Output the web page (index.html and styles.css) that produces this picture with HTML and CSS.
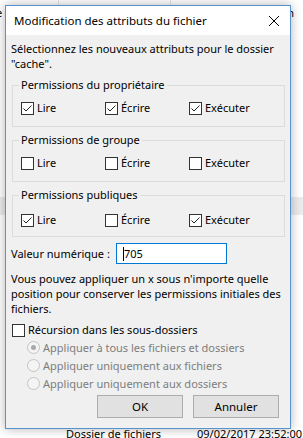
FILE: index.html
```html
<!DOCTYPE html>
<html lang="fr">
<head>
  <meta charset="UTF-8" />
  <title>Modification des attributs du fichier</title>
  <link rel="stylesheet" href="styles.css">
</head>
<body>
  <div class="explorer">
    <div class="header">
      <span class="col col-name"></span>
      <span class="col col-size"></span>
      <span class="col col-type"></span>
    </div>
    <div class="row top-row">
      <span class="cell-name">e</span>
      <span class="cell-date">n</span>
    </div>
    <div class="row band"></div>
    <div class="row last-row">
      <span class="cell-type">Dossier de fichiers</span>
      <span class="cell-time">09/02/2017 23:52:00</span>
    </div>
  </div>

  <div class="dialog">
    <div class="titlebar">
      <span class="title">Modification des attributs du fichier</span>
      <svg class="close" viewBox="0 0 10 10" fill="none" stroke="#000" stroke-width="1">
        <path d="M0 0L10 10M10 0L0 10"></path>
      </svg>
    </div>

    <div class="content">
      <p class="intro">Sélectionnez les nouveaux attributs pour le dossier "cache".</p>

      <fieldset class="group">
        <legend>Permissions du propriétaire</legend>
        <div class="checks">
          <label class="check"><span class="box"><svg viewBox="0 0 11 11"><path d="M1.5 5.5L4 8L9.5 2.5"></path></svg></span>Lire</label>
          <label class="check"><span class="box"><svg viewBox="0 0 11 11"><path d="M1.5 5.5L4 8L9.5 2.5"></path></svg></span>Écrire</label>
          <label class="check"><span class="box"><svg viewBox="0 0 11 11"><path d="M1.5 5.5L4 8L9.5 2.5"></path></svg></span>Exécuter</label>
        </div>
      </fieldset>

      <fieldset class="group">
        <legend>Permissions de groupe</legend>
        <div class="checks">
          <label class="check"><span class="box"></span>Lire</label>
          <label class="check"><span class="box"></span>Écrire</label>
          <label class="check"><span class="box"></span>Exécuter</label>
        </div>
      </fieldset>

      <fieldset class="group public">
        <legend>Permissions publiques</legend>
        <div class="checks">
          <label class="check"><span class="box"><svg viewBox="0 0 11 11"><path d="M1.5 5.5L4 8L9.5 2.5"></path></svg></span>Lire</label>
          <label class="check"><span class="box"></span>Écrire</label>
          <label class="check"><span class="box"><svg viewBox="0 0 11 11"><path d="M1.5 5.5L4 8L9.5 2.5"></path></svg></span>Exécuter</label>
        </div>
      </fieldset>

      <div class="value-row">
        <span class="value-label">Valeur numérique :</span>
        <div class="value-input"><span class="caret"></span>705</div>
      </div>

      <p class="hint">Vous pouvez appliquer un x sous n'importe quelle position pour conserver les permissions initiales des fichiers.</p>

      <label class="check recurse"><span class="box"></span>Récursion dans les sous-dossiers</label>

      <div class="radios">
        <div class="radio"><span class="dot on"></span>Appliquer à tous les fichiers et dossiers</div>
        <div class="radio"><span class="dot"></span>Appliquer uniquement aux fichiers</div>
        <div class="radio"><span class="dot"></span>Appliquer uniquement aux dossiers</div>
      </div>

      <div class="buttons">
        <button class="btn">OK</button>
        <button class="btn">Annuler</button>
      </div>
    </div>
  </div>
</body>
</html>
```

FILE: styles.css
```css
:root {
  --face: #f0f0f0;
  --group-line: #dcdcdc;
  --accent: #5592d0;
  --input-line: #0078d7;
  --disabled: #7d7d7d;
}

body {
  margin: 0;
  width: 303px;
  height: 438px;
  overflow: hidden;
  position: relative;
  background: #fff;
  font-family: 'Noto Sans', 'Open Sans', sans-serif;
  font-size: 11px;
  color: #000;
}

/* file list behind the dialog */
.explorer {
  display: flex;
  flex-direction: column;
  height: 438px;
}

.header {
  display: flex;
  height: 5px;
}

.col {
  border-right: 1px solid #e5e5e5;
}

.col-name { width: 58px; }
.col-size { width: 111px; }
.col-type { flex: 1; border-right: none; }

.row {
  display: flex;
  height: 16px;
  line-height: 16px;
}

.top-row {
  justify-content: space-between;
  padding-right: 9px;
}

.cell-name {
  margin-left: -4px;
}

.band {
  margin-top: 176px;
  height: 18px;
  background: #ebebeb;
}

.last-row {
  margin-top: auto;
  height: 14px;
  line-height: 14px;
  margin-bottom: -3px;
}

.cell-type {
  margin-left: 66px;
  width: 131px;
}

/* dialog */
.dialog {
  position: absolute;
  left: 5px;
  top: 5px;
  width: 284px;
  height: 422px;
  border: 1px solid var(--accent);
  background: var(--face);
  box-shadow: 0 0 10px rgba(0, 0, 0, 0.3);
  display: flex;
  flex-direction: column;
}

.titlebar {
  height: 29px;
  flex-shrink: 0;
  background: #fff;
  display: flex;
  align-items: center;
  justify-content: space-between;
  padding: 0 11px 0 8px;
  font-size: 11.5px;
}

.close {
  width: 10px;
  height: 10px;
}

.content {
  padding: 6px 5px 0 5px;
  line-height: 15px;
}

.intro, .hint {
  margin: 0;
}

.group {
  margin: 6px 0 0 1px;
  padding: 7px 8px 10px;
  border: 1px solid var(--group-line);
  min-width: 0;
}

.group + .group {
  margin-top: 5px;
}

.group.public {
  padding-top: 9px;
  padding-bottom: 8px;
}

.group legend {
  padding: 0 2px;
  margin-left: -2px;
  line-height: 16px;
}

.checks {
  display: grid;
  grid-template-columns: 84px 84px 1fr;
}

.check {
  display: flex;
  align-items: center;
  gap: 3px;
  line-height: 16px;
}

.box {
  width: 11px;
  height: 11px;
  border: 1px solid #333;
  background: #fff;
  display: flex;
}

.box svg {
  width: 11px;
  height: 11px;
  fill: none;
  stroke: #222;
  stroke-width: 1;
}

.value-row {
  display: flex;
  align-items: center;
  margin-top: 6px;
}

.value-label {
  width: 105px;
}

.value-input {
  width: 103px;
  height: 19px;
  line-height: 19px;
  border: 1px solid var(--input-line);
  background: #fff;
  padding-left: 6px;
  display: flex;
  align-items: center;
}

.caret {
  width: 1px;
  height: 14px;
  background: #000;
}

.hint {
  margin-top: 7px;
}

.recurse {
  margin-top: 6px;
  margin-left: 1px;
}

.radios {
  margin-top: 0;
  padding-left: 16px;
  color: var(--disabled);
}

.radio {
  display: flex;
  align-items: center;
  gap: 3px;
  height: 18px;
}

.dot {
  width: 11px;
  height: 11px;
  border: 1px solid #c4c4c4;
  border-radius: 50%;
  background: #f4f4f4;
  position: relative;
}

.dot.on::after {
  content: "";
  position: absolute;
  left: 3px;
  top: 3px;
  width: 5px;
  height: 5px;
  border-radius: 50%;
  background: #a8a8a8;
}

.buttons {
  display: flex;
  justify-content: flex-end;
  gap: 10px;
  margin-top: 3px;
  padding-right: 6px;
}

.btn {
  width: 86px;
  height: 23px;
  border: 1px solid #adadad;
  background: #e1e1e1;
  font-family: inherit;
  font-size: 11.5px;
  color: #000;
  padding: 0;
}
```
